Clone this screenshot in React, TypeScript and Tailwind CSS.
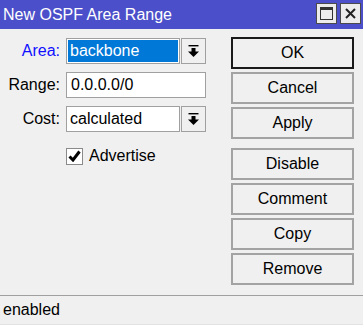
import React from "react";

const font = { fontFamily: '"Liberation Sans", Arial, sans-serif' };

function DropIcon() {
  return (
    <svg width="11" height="12" viewBox="0 0 11 12">
      <rect x="0.5" y="0" width="10" height="1.4" fill="#000" />
      <rect x="3.5" y="3" width="4" height="4" fill="#000" />
      <polygon points="0,6.5 11,6.5 5.5,12" fill="#000" />
    </svg>
  );
}

function DropButton() {
  return (
    <div className="w-[25px] h-[26px] border border-[#a0a0a0] bg-[#f0f0f0] flex items-center justify-center">
      <DropIcon />
    </div>
  );
}

function Btn({ label, primary }: { label: string; primary?: boolean }) {
  return (
    <div
      className={
        "w-[123px] h-[32px] flex items-center justify-center text-[16px] text-black bg-[#f0f0f0] " +
        (primary ? "border-2 border-[#1a1a1a]" : "border-2 border-[#a3a3a3]")
      }
    >
      {label}
    </div>
  );
}

export default function App() {
  return (
    <div className="w-[363px] h-[325px] bg-[#f0f0f0] flex flex-col overflow-hidden" style={font}>
      <div className="h-[29px] bg-[#4b4fc9] flex items-center justify-between pl-[3px] pr-[2px]">
        <span className="text-white text-[16px] leading-none">New OSPF Area Range</span>
        <div className="flex gap-[3px] self-start mt-[3px]">
          <div className="w-[21px] h-[21px] bg-[#ececec] border border-[#4a4a4a] flex items-center justify-center">
            <svg width="13" height="13" viewBox="0 0 13 13">
              <rect x="0.5" y="0.5" width="12" height="12" fill="none" stroke="#333" strokeWidth="1" />
              <rect x="0.5" y="0.5" width="12" height="2.5" fill="#333" />
            </svg>
          </div>
          <div className="w-[21px] h-[21px] bg-[#ececec] border border-[#4a4a4a] flex items-center justify-center">
            <svg width="11" height="11" viewBox="0 0 11 11">
              <path d="M1 1 L10 10 M10 1 L1 10" stroke="#222" strokeWidth="2" />
            </svg>
          </div>
        </div>
      </div>

      <div className="flex h-[266px] pt-[8px]">
        <div className="w-[231px] flex flex-col pt-[1px]">
          <div className="flex items-center h-[26px]">
            <div className="w-[60px] text-right text-[16px] text-[#1010ff]">Area:</div>
            <div className="ml-[6px] w-[114px] h-[26px] border border-[#a0a0a0] bg-white p-[1px]">
              <div className="w-full h-full bg-[#0078d7] text-white text-[16px] flex items-center pl-[2px]">
                backbone
              </div>
            </div>
            <div className="ml-[1px]">
              <DropButton />
            </div>
          </div>
          <div className="flex items-center h-[26px] mt-[8px]">
            <div className="w-[60px] text-right text-[16px] text-black">Range:</div>
            <div className="ml-[6px] w-[140px] h-[26px] border border-[#a0a0a0] bg-white text-[16px] text-black flex items-center pl-[4px]">
              0.0.0.0/0
            </div>
          </div>
          <div className="flex items-center h-[26px] mt-[8px]">
            <div className="w-[60px] text-right text-[16px] text-black">Cost:</div>
            <div className="ml-[6px] w-[114px] h-[26px] border border-[#a0a0a0] bg-white text-[16px] text-black flex items-center pl-[3px]">
              calculated
            </div>
            <div className="ml-[1px]">
              <DropButton />
            </div>
          </div>
          <div className="flex items-center mt-[12px] ml-[66px]">
            <div className="w-[17px] h-[17px] border border-[#8a8a8a] bg-white flex items-center justify-center">
              <svg width="13" height="12" viewBox="0 0 13 12">
                <path d="M1.5 6.5 L5 10 L11.5 1.5" fill="none" stroke="#000" strokeWidth="3" />
              </svg>
            </div>
            <span className="ml-[6px] text-[16px] text-black">Advertise</span>
          </div>
        </div>

        <div className="flex flex-col">
          <div className="flex flex-col gap-[3px]">
            <Btn label="OK" primary />
            <Btn label="Cancel" />
            <Btn label="Apply" />
          </div>
          <div className="flex flex-col gap-[3px] mt-[9px]">
            <Btn label="Disable" />
            <Btn label="Comment" />
            <Btn label="Copy" />
            <Btn label="Remove" />
          </div>
        </div>
      </div>

      <div className="h-[30px] border-t border-[#a0a0a0] flex items-center pl-[3px] text-[16px] text-black border-b border-b-[#e2e2e2]">
        enabled
      </div>
    </div>
  );
}
